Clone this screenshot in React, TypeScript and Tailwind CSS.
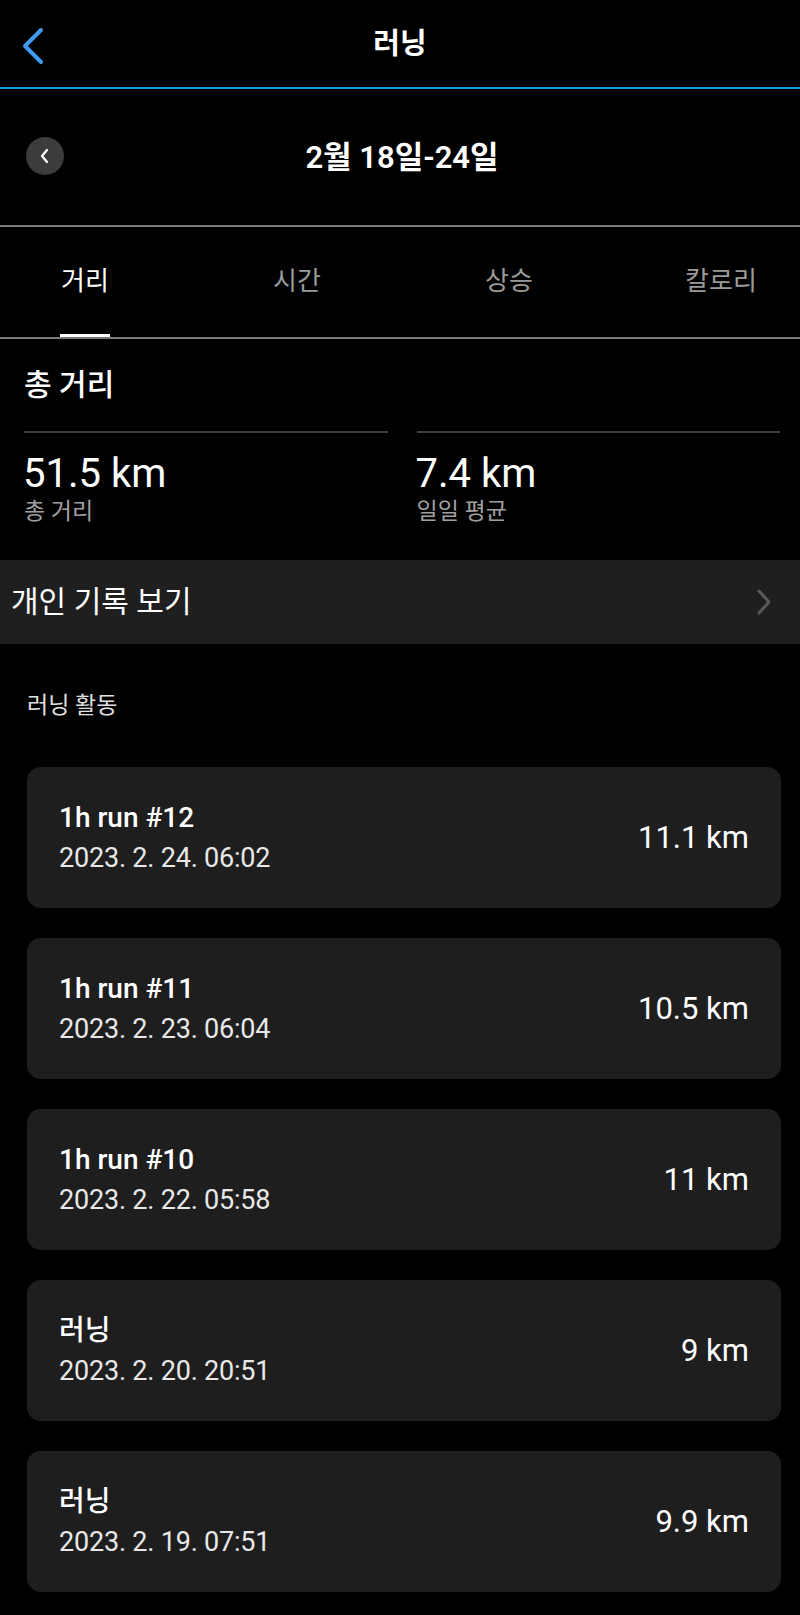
import React from 'react';

const FONT = { fontFamily: 'Roboto, "Noto Sans CJK KR", sans-serif' };

interface Activity {
  title: string;
  date: string;
  distance: string;
}

const activities: Activity[] = [
  { title: '1h run #12', date: '2023. 2. 24. 06:02', distance: '11.1 km' },
  { title: '1h run #11', date: '2023. 2. 23. 06:04', distance: '10.5 km' },
  { title: '1h run #10', date: '2023. 2. 22. 05:58', distance: '11 km' },
  { title: '러닝', date: '2023. 2. 20. 20:51', distance: '9 km' },
  { title: '러닝', date: '2023. 2. 19. 07:51', distance: '9.9 km' },
];

const tabs = ['거리', '시간', '상승', '칼로리'];

function ActivityCard({ item }: { item: Activity }) {
  return (
    <div className="flex items-center justify-between h-[141px] rounded-[14px] bg-[#1e1e1e] pl-[32px] pr-[32px]">
      <div className="flex flex-col">
        <span className="text-[28px] leading-[36px] font-medium text-white">{item.title}</span>
        <span className="text-[27px] leading-[36px] tracking-[-0.2px] text-[#e8e8e8] mt-[4px]">{item.date}</span>
      </div>
      <span className="text-[31px] leading-[40px] text-white">{item.distance}</span>
    </div>
  );
}

export default function App() {
  return (
    <div className="w-[800px] h-[1615px] bg-black text-white overflow-hidden" style={FONT}>
      {/* top bar */}
      <div className="relative flex items-center justify-center h-[87px]">
        <svg className="absolute left-[20px] top-[27px]" width="26" height="38" viewBox="0 0 26 38" fill="none">
          <path d="M21 3 L5 19 L21 35" stroke="#3d9bf0" strokeWidth="4" strokeLinecap="round" strokeLinejoin="round" />
        </svg>
        <span className="text-[29px] font-semibold leading-none mt-[2px]">러닝</span>
      </div>
      <div className="h-[2px] bg-[#1a9be0]" />

      {/* week selector */}
      <div className="relative flex items-center justify-center h-[136px]">
        <div className="absolute left-[26px] top-[48px] flex items-center justify-center w-[38px] h-[38px] rounded-full bg-[#3c3c3c]">
          <svg width="14" height="16" viewBox="0 0 14 16" fill="none">
            <path d="M9 2 L4 8 L9 14" stroke="white" strokeWidth="2.2" strokeLinecap="round" strokeLinejoin="round" />
          </svg>
        </div>
        <span className="text-[31px] font-semibold leading-none ml-[4px]">2월 18일-24일</span>
      </div>
      <div className="h-[2px] bg-[#7a7a7a]" />

      {/* tabs */}
      <div className="flex h-[110px] -ml-[21px]">
        {tabs.map((t, i) => (
          <div key={t} className="w-[212px] shrink-0 flex flex-col items-center">
            <div className="flex-1 flex items-center">
              <span className={`text-[26px] leading-none ${i === 0 ? 'text-white' : 'text-[#9a9a9a]'}`}>{t}</span>
            </div>
            <div className={`h-[3px] w-[50px] ${i === 0 ? 'bg-white' : 'bg-transparent'}`} />
          </div>
        ))}
      </div>
      <div className="h-[2px] bg-[#7a7a7a]" />

      {/* totals */}
      <div className="pl-[24px] pr-[20px]">
        <div className="h-[92px] flex items-center">
          <span className="text-[30px] font-medium leading-none">총 거리</span>
        </div>
        <div className="grid grid-cols-2 gap-[29px]">
          <div className="flex flex-col">
            <div className="h-[2px] bg-[#3c3c3c]" />
            <span className="text-[40px] leading-[48px] mt-[17px] -ml-[1px]">51.5 km</span>
            <span className="text-[23px] leading-[28px] text-[#a0a0a0]">총 거리</span>
          </div>
          <div className="flex flex-col">
            <div className="h-[2px] bg-[#3c3c3c]" />
            <span className="text-[40px] leading-[48px] mt-[17px] -ml-[1px]">7.4 km</span>
            <span className="text-[23px] leading-[28px] text-[#a0a0a0]">일일 평균</span>
          </div>
        </div>
      </div>

      {/* personal records */}
      <div className="flex items-center justify-between h-[84px] mt-[34px] bg-[#1f1f1f] pl-[11px] pr-[28px]">
        <span className="text-[30px] leading-none">개인 기록 보기</span>
        <svg width="16" height="26" viewBox="0 0 16 26" fill="none">
          <path d="M3 2 L13 13 L3 24" stroke="#5a5a5a" strokeWidth="3" strokeLinecap="round" strokeLinejoin="round" />
        </svg>
      </div>

      {/* activity list */}
      <div className="pl-[27px] pr-[19px]">
        <div className="h-[123px] flex items-center">
          <span className="text-[23px] leading-none text-[#e0e0e0]">러닝 활동</span>
        </div>
        <div className="flex flex-col gap-[30px]">
          {activities.map((a, i) => (
            <ActivityCard key={i} item={a} />
          ))}
        </div>
      </div>
    </div>
  );
}
